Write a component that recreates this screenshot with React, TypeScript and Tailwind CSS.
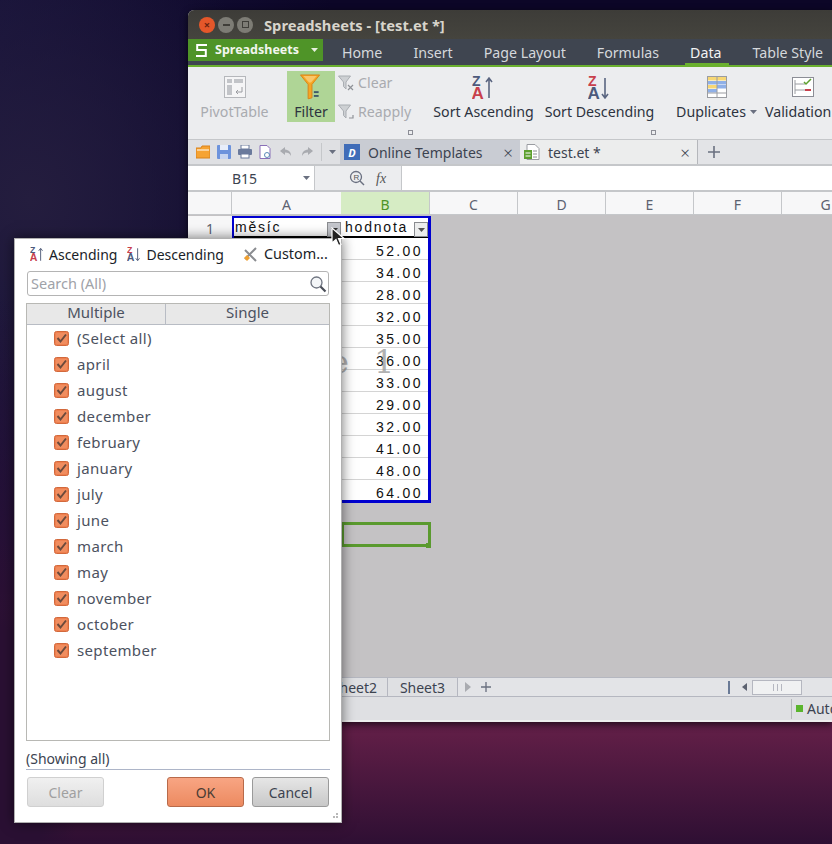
import React from 'react';

const tabs = ['Home', 'Insert', 'Page Layout', 'Formulas', 'Data', 'Table Style'];
const columns = ['C', 'D', 'E', 'F', 'G'];
const values = ['52.00', '34.00', '28.00', '32.00', '35.00', '36.00', '33.00', '29.00', '32.00', '41.00', '48.00', '64.00'];
const months = ['(Select all)', 'april', 'august', 'december', 'february', 'january', 'july', 'june', 'march', 'may', 'november', 'october', 'september'];

function SortIcon({ down, size = 24 }: { down?: boolean; size?: number }) {
  const top = down ? '#c8404c' : '#4d5a7c';
  const bottom = down ? '#4d5a7c' : '#c8404c';
  return (
    <svg width={size} height={size} viewBox="0 0 24 24" className="shrink-0">
      <text x="0" y="10" fontSize="14" fontWeight="700" fontFamily="Liberation Sans" fill={top}>Z</text>
      <text x="-0.5" y="23" fontSize="17" fontWeight="700" fontFamily="Liberation Sans" fill={bottom}>A</text>
      {down ? (
        <path d="M17 2v19M14 18l3 4 3-4" stroke="#5a6580" strokeWidth="1.6" fill="none" />
      ) : (
        <path d="M17 22V3M14 6l3-4 3 4" stroke="#5a6580" strokeWidth="1.6" fill="none" />
      )}
    </svg>
  );
}

function FunnelSmall({ children }: { children?: React.ReactNode }) {
  return (
    <svg width="16" height="16" viewBox="0 0 16 16" className="shrink-0">
      <path d="M0.5 1h12L8 7v7L5.5 11.500V7z" fill="#cdd0d3" stroke="#a9adb2" />
      {children}
    </svg>
  );
}

function Check() {
  return (
    <svg width="15" height="15" viewBox="0 0 15 15" className="shrink-0">
      <rect x="0.5" y="0.500" width="14" height="14" rx="2" fill="#ee7f4e" stroke="#d2693c" />
      <rect x="2" y="2" width="11" height="11" rx="1" fill="#f08d5f" />
      <path d="M3.500 7l3 3.500 5.500-7" stroke="#6b4a3c" strokeWidth="2" fill="none" />
    </svg>
  );
}

function Caret({ color = '#6a7080' }: { color?: string }) {
  return (
    <svg width="7" height="4" viewBox="0 0 7 4" className="shrink-0">
      <path d="M0 0h7L3.500 4z" fill={color} />
    </svg>
  );
}

function Plus({ size }: { size: number }) {
  return (
    <svg width={size} height={size} viewBox="0 0 12 12" className="shrink-0">
      <path d="M6 0v12M0 6h12" stroke="#6a7080" strokeWidth="1.600" />
    </svg>
  );
}

function SpreadsheetWindow() {
  return (
    <div className="absolute left-[188px] top-[10px] flex h-[712px] w-[644px] flex-col overflow-hidden rounded-tl-[6px] bg-[#e3e4e7] text-[14px] text-[#3c4350] shadow-[0_2px_7px_rgba(0,0,0,0.65)]">
      {/* title bar */}
      <div className="flex h-[29px] shrink-0 items-center bg-gradient-to-b from-[#3d3c38] to-[#45443e] pl-[11px]">
        <div className="flex items-center gap-[3px]">
          <div className="flex h-[16px] w-[16px] items-center justify-center rounded-full bg-[#e4572a] text-[11px] font-bold leading-none text-[#6b2410]">×</div>
          <div className="flex h-[16px] w-[16px] items-center justify-center rounded-full bg-[#7d7c75]">
            <div className="h-[2px] w-[7px] bg-[#3f3e39]"></div>
          </div>
          <div className="flex h-[16px] w-[16px] items-center justify-center rounded-full bg-[#7d7c75]">
            <div className="h-[7px] w-[7px] border border-[#3f3e39]"></div>
          </div>
        </div>
        <span className="ml-[11px] pt-[1px] text-[14.7px] font-bold text-[#d8d5cc]">Spreadsheets - [test.et *]</span>
      </div>

      {/* tab bar */}
      <div className="flex h-[26px] shrink-0 items-start bg-[#3f4550]">
        <div className="flex h-[22px] w-[135px] items-center bg-[#4f9428] pl-[8px] text-[12.5px] font-bold text-[#f2f6ee]">
          <svg width="11" height="13" viewBox="0 0 11 13" className="mr-[8px] shrink-0">
            <path d="M11 1H1.200v5H9.800v6H0" stroke="#fff" strokeWidth="2" fill="none" />
          </svg>
          <span>Spreadsheets</span>
          <span className="ml-auto mr-[5px]"><Caret color="#e8f0e0" /></span>
        </div>
        <div className="ml-[19px] flex h-[26px] items-center gap-[31px] whitespace-nowrap pt-[2px] text-[14.2px] text-[#d5d8dc]">
          {tabs.map((t) => (
            <span key={t} className={t === 'Data' ? 'relative text-[#f2f3f4]' : ''}>
              {t}
              {t === 'Data' && <span className="absolute -bottom-[1px] -left-[5px] -right-[8px] h-[2px] bg-[#6ab02e]"></span>}
            </span>
          ))}
        </div>
      </div>
      <div className="h-[2px] shrink-0 bg-[#6ab02e]"></div>

      {/* ribbon */}
      <div className="relative flex h-[73px] shrink-0 items-start whitespace-nowrap border-b border-[#c5c7ca] bg-[#ecedef] pt-[4px] text-[14.2px] text-[#2d3340]">
        <div className="ml-[11px] flex w-[71px] flex-col items-center text-[#a9abb0]">
          <svg width="24" height="24" viewBox="0 0 24 24" className="mt-[4px]">
            <rect x="1.500" y="1.500" width="21" height="21" fill="#f5f5f6" stroke="#b5b7bb" />
            <rect x="4" y="4" width="5" height="4" fill="#c2c4c8" />
            <rect x="11" y="4" width="9" height="4" fill="#c2c4c8" />
            <rect x="4" y="10" width="5" height="10" fill="#c2c4c8" />
            <path d="M19 12v5h-6M15 15l-2 2 2 2" stroke="#9a9ca1" fill="none" />
          </svg>
          <span className="mt-[2px]">PivotTable</span>
        </div>
        <div className="ml-[17px] flex h-[51px] w-[48px] flex-col items-center bg-[#afd596]">
          <svg width="24" height="28" viewBox="0 0 24 28" className="mt-[3px]">
            <path d="M1 1h20l-8 10v14l-4 1V11z" fill="#f5a623" stroke="#d9821a" />
            <path d="M4 2h14l-6 7H10z" fill="#f9c66a" />
            <rect x="15" y="18" width="5" height="2" fill="#3f5a6a" />
            <rect x="15" y="22" width="5" height="2" fill="#3f5a6a" />
          </svg>
          <span className="text-[#2d3340]">Filter</span>
        </div>
        <div className="ml-[3px] flex w-[95px] flex-col pt-[2px] text-[#a9abb0]">
          <div className="flex h-[20px] items-center gap-[4px]">
            <FunnelSmall><path d="M10 10l5 5M15 10l-5 5" stroke="#8f9297" strokeWidth="1.200" /></FunnelSmall>
            <span>Clear</span>
          </div>
          <div className="mt-[9px] flex h-[20px] items-center gap-[4px]">
            <FunnelSmall><path d="M11 14h4v-3" stroke="#8f9297" strokeWidth="1.200" fill="none" /></FunnelSmall>
            <span>Reapply</span>
          </div>
        </div>
        <div className="flex w-[101px] flex-col items-center pt-[5px]">
          <SortIcon />
          <span className="mt-[1px]">Sort Ascending</span>
        </div>
        <div className="ml-[11px] flex w-[109px] flex-col items-center pt-[5px]">
          <SortIcon down />
          <span className="mt-[1px]">Sort Descending</span>
        </div>
        <div className="ml-[22px] flex w-[81px] flex-col items-center pt-[5px]">
          <svg width="20" height="22" viewBox="0 0 20 22">
            <rect x="0.500" y="0.500" width="19" height="21" fill="#fff" stroke="#9a9ca1" />
            <rect x="1" y="1" width="9" height="3.500" fill="#f7d774" />
            <rect x="10" y="1" width="9" height="3.500" fill="#f7d774" />
            <rect x="1" y="5" width="9" height="3.500" fill="#8fb0e8" />
            <rect x="10" y="5" width="9" height="3.500" fill="#8fb0e8" />
            <rect x="1" y="9" width="9" height="3.500" fill="#f7d774" />
            <rect x="10" y="9" width="9" height="3.500" fill="#8fb0e8" />
            <rect x="1" y="13" width="9" height="3.500" fill="#8fb0e8" />
            <path d="M10 0v22M0 17h20" stroke="#9a9ca1" />
          </svg>
          <span className="mt-[3px] flex items-center gap-[4px]">Duplicates<Caret /></span>
        </div>
        <div className="ml-[8px] flex flex-col items-start pt-[6px]">
          <svg width="22" height="20" viewBox="0 0 22 20" className="ml-[27px]">
            <rect x="0.500" y="0.500" width="21" height="19" fill="#fff" stroke="#8c8e96" />
            <path d="M3 7h10M3 13h10M3 3v14" stroke="#9a9ca1" />
            <path d="M12 5l2 2 5-5" stroke="#5da02e" strokeWidth="1.500" fill="none" />
            <rect x="13" y="12" width="6" height="2" fill="#c8404c" />
          </svg>
          <span className="mt-[4px]">Validation</span>
        </div>
        <div className="absolute left-[220px] top-[63px] h-[5px] w-[5px] border border-[#8c8e96]"></div>
        <div className="absolute left-[463px] top-[63px] h-[5px] w-[5px] border border-[#8c8e96]"></div>
      </div>

      {/* quick access + document tabs */}
      <div className="flex h-[26px] shrink-0 items-center whitespace-nowrap border-b-2 border-[#c5c7ca] bg-[#e3e4e7]">
        <div className="flex h-full w-[152px] items-center gap-[7px] bg-[#dfe0e3] pl-[8px]">
          <svg width="14" height="14" viewBox="0 0 14 14"><path d="M0 3h5l1-2h8v12H0z" fill="#f6a332" stroke="#d9821a" /><path d="M1 5h12" stroke="#fff" /></svg>
          <svg width="14" height="14" viewBox="0 0 14 14"><rect width="14" height="14" rx="1" fill="#6d93dc" /><rect x="3" y="0" width="8" height="5" fill="#e8eefa" /><rect x="3" y="9" width="8" height="5" fill="#c7d5f0" /></svg>
          <svg width="14" height="14" viewBox="0 0 14 14"><rect x="3" y="0" width="8" height="4" fill="#fff" stroke="#6a7a9c" /><rect y="4" width="14" height="6" rx="1" fill="#6a7a9c" /><rect x="3" y="9" width="8" height="4" fill="#fff" stroke="#6a7a9c" /></svg>
          <svg width="13" height="14" viewBox="0 0 13 14"><path d="M1 .5h7l3 3v10H1z" fill="#fff" stroke="#8a70b8" /><circle cx="8" cy="10" r="2.500" fill="none" stroke="#5a8ab8" /></svg>
          <svg width="14" height="12" viewBox="0 0 14 12"><path d="M6 1L1 5l5 4V6.500c3 0 5 1 6 3.500 0-4-2-6-6-6.500z" fill="#a9abb0" /></svg>
          <svg width="14" height="12" viewBox="0 0 14 12"><path d="M8 1l5 4-5 4V6.500c-3 0-5 1-6 3.500 0-4 2-6 6-6.500z" fill="#a9abb0" /></svg>
          <div className="h-[18px] w-px bg-[#c5c7ca]"></div>
          <Caret />
        </div>
        <div className="flex h-full w-[180px] items-center bg-[#c9ccd3] pl-[4px] text-[#3c4350]">
          <div className="flex h-[16px] w-[16px] items-center justify-center bg-[#3f6cb8] text-[11px] font-bold italic leading-none text-white">D</div>
          <span className="ml-[8px]">Online Templates</span>
          <span className="ml-auto mr-[7px] text-[17px] font-light leading-none">×</span>
        </div>
        <div className="flex h-full w-[178px] items-center border-r border-[#b5b7bb] bg-[#eceded] pl-[4px]">
          <svg width="16" height="16" viewBox="0 0 16 16">
            <path d="M3 .5h8l4 4v11H3z" fill="#fff" stroke="#9a9ca1" />
            <rect x="0" y="6" width="8" height="9" fill="#5da02e" />
            <path d="M1.500 9h5M1.500 12h5" stroke="#fff" />
            <path d="M9 7h4M9 10h4M9 13h4" stroke="#8a8c90" />
          </svg>
          <span className="ml-[8px]">test.et *</span>
          <span className="ml-auto mr-[7px] text-[17px] font-light leading-none">×</span>
        </div>
        <span className="ml-[10px]"><Plus size={12} /></span>
      </div>

      {/* formula bar */}
      <div className="flex h-[26px] shrink-0 items-center border-b-2 border-[#c5c7ca] bg-[#ecedef]">
        <div className="flex h-full w-[127px] items-center border-r border-[#c5c7ca] bg-white pr-[4px]">
          <span className="ml-[44px]">B15</span>
          <span className="ml-auto"><Caret /></span>
        </div>
        <svg width="16" height="16" viewBox="0 0 16 16" className="ml-[34px]">
          <circle cx="7" cy="7" r="5.500" fill="none" stroke="#6a7080" strokeWidth="1.300" />
          <text x="4.500" y="10" fontSize="8" fontFamily="Liberation Sans" fill="#555">R</text>
          <path d="M11 11l4 4" stroke="#6a7080" strokeWidth="1.500" />
        </svg>
        <span className="ml-[11px] font-['Liberation_Serif',serif] text-[14px] italic text-[#555]">fx</span>
        <div className="ml-[15px] h-full flex-1 border-l border-[#c5c7ca] bg-white"></div>
      </div>

      {/* column headers */}
      <div className="flex h-[23px] shrink-0 border-b border-[#c5c7ca] bg-[#f7f7f8] text-[#5c6270]">
        <div className="w-[44px] shrink-0 border-r border-[#c5c7ca]"></div>
        <div className="flex w-[109px] shrink-0 items-center justify-center pt-[3px]">A</div>
        <div className="flex w-[88px] shrink-0 items-center justify-center bg-[#d6ecc4] pt-[3px] text-[#4f9428]">B</div>
        {columns.map((c) => (
          <div key={c} className="flex w-[88px] shrink-0 items-center justify-center border-l border-[#c5c7ca] pt-[3px]">{c}</div>
        ))}
      </div>

      {/* sheet */}
      <div className="relative flex-1 bg-[#c4c2c4] pt-[1px] font-['Liberation_Sans',sans-serif] text-[#111]">
        <div className="flex">
          <div className="flex h-[22px] w-[44px] shrink-0 items-center justify-center bg-[#f7f7f8] pt-[3px] font-['Noto_Sans',sans-serif] text-[#5c6270]">1</div>
          <div className="w-[199px] border-2 border-r-[3px] border-b-[3px] border-[#0000d0] bg-white">
            <div className="flex h-[20px] border-b-2 border-black tracking-[1.8px]">
              <div className="flex w-[107px] items-end justify-between pl-[1px]">
                <span className="leading-[18px]">měsíc</span>
                <div className="-mb-[1px] flex h-[15px] w-[14px] items-center justify-center border border-[#8a8c90] bg-[#c4c6cc]"><Caret color="#333" /></div>
              </div>
              <div className="flex flex-1 items-end justify-between pl-[4px]">
                <span className="leading-[18px]">hodnota</span>
                <div className="-mb-[1px] flex h-[15px] w-[14px] items-center justify-center border border-[#8a8c90] bg-[#eceded]"><Caret color="#555" /></div>
              </div>
            </div>
            {values.map((v, i) => (
              <div key={i} className="flex h-[22px] items-start justify-end border-b border-[#d4d4d4] pr-[5px] pt-[3px] leading-[20px] tracking-[2.4px] last:h-[20px] last:border-b-0">{v}</div>
            ))}
          </div>
        </div>
        {/* selected cell B15 */}
        <div className="relative ml-[153px] mt-[19px] h-[25px] w-[90px] border-[3px] border-[#5a9a2e]">
          <div className="absolute -bottom-[4px] -right-[3px] h-[5px] w-[5px] bg-[#5a9a2e]"></div>
        </div>
        <div className="absolute left-[142px] top-[123px] whitespace-pre font-['DejaVu_Serif',serif] text-[32px] tracking-[7.5px] text-[#9c9c9c]/80">e 1</div>
      </div>

      {/* sheet tabs */}
      <div className="flex h-[20px] shrink-0 items-center border-y border-[#b5b7c0] bg-[#e3e4e7] text-[#3c4350]">
        <div className="ml-[134px] flex h-full w-[66px] shrink-0 items-center justify-center border-r border-[#b5b7c0] bg-[#dfe0e3]">Sheet2</div>
        <div className="flex h-full w-[70px] shrink-0 items-center justify-center border-r border-[#b5b7c0] bg-[#dfe0e3]">Sheet3</div>
        <svg width="6" height="10" viewBox="0 0 6 10" className="ml-[7px]"><path d="M0 0l6 5-6 5z" fill="#a9abb0" /></svg>
        <span className="ml-[10px]"><Plus size={10} /></span>
        <div className="ml-[237px] h-[13px] w-[2px] bg-[#6a7a96]"></div>
        <svg width="5" height="8" viewBox="0 0 5 8" className="ml-[12px]"><path d="M5 0L0 4l5 4z" fill="#5c6270" /></svg>
        <div className="ml-[5px] flex h-[15px] w-[50px] items-center justify-center gap-[3px] border border-[#b5b7c0] bg-[#f0f1f2]">
          <div className="h-[7px] w-px bg-[#b5b7c0]"></div>
          <div className="h-[7px] w-px bg-[#b5b7c0]"></div>
          <div className="h-[7px] w-px bg-[#b5b7c0]"></div>
        </div>
      </div>

      {/* status bar */}
      <div className="flex h-[25px] shrink-0 items-center overflow-hidden whitespace-nowrap border-b-2 border-[#eeeeee] bg-[#dfe0e3]">
        <div className="ml-[603px] h-[20px] w-px shrink-0 bg-[#b5b7bb]"></div>
        <div className="ml-[4px] h-[7px] w-[7px] shrink-0 bg-[#5bb52e]"></div>
        <span className="ml-[4px] text-[#3c4350]">Auto</span>
      </div>
    </div>
  );
}

function FilterDialog() {
  return (
    <div className="absolute left-[14px] top-[238px] flex h-[585px] w-[328px] flex-col border border-[#b0b0b0] bg-white px-[11px] text-[14px] text-[#3c4350] shadow-[0_0_12px_rgba(0,0,0,0.55)]">
      <div className="flex h-[32px] shrink-0 items-center whitespace-nowrap pb-[2px] pl-[4px] text-[#1a1e28]">
        <SortIcon size={15} />
        <span className="ml-[4px]">Ascending</span>
        <span className="ml-[10px]"><SortIcon down size={15} /></span>
        <span className="ml-[4px]">Descending</span>
        <svg width="16" height="15" viewBox="0 0 16 15" className="ml-[19px] shrink-0">
          <path d="M2 3l11 11M13 1l-11 11" stroke="#8a8c90" strokeWidth="2" />
          <path d="M1 11l3 3 3-3-3-3z" fill="#f0a030" />
        </svg>
        <span className="ml-[5px] text-[14.4px]">Custom...</span>
      </div>
      <div className="ml-[1px] flex h-[25px] w-[302px] shrink-0 items-center justify-between rounded-[3px] border border-[#b4b4b4] pl-[3px] pr-[1px] text-[14.5px] text-[#a0a2a8]">
        <span>Search (All)</span>
        <svg width="18" height="18" viewBox="0 0 18 18">
          <circle cx="7.500" cy="7.500" r="5.500" fill="#f4f6f8" stroke="#6f7480" strokeWidth="1.300" />
          <path d="M11.500 11.500L16.500 16.500" stroke="#4a4e58" strokeWidth="2.200" />
        </svg>
      </div>
      <div className="mt-[7px] flex h-[438px] w-[304px] shrink-0 flex-col border border-[#b8b8b4] text-[15px] tracking-[0.35px] text-[#4c5260]">
        <div className="flex h-[21px] shrink-0 border-b border-[#b8bcc4] bg-[#e8e8e8] tracking-normal">
          <div className="flex w-[139px] items-center justify-center border-r border-[#b8bcc4] pb-[3px]">Multiple</div>
          <div className="flex flex-1 items-center justify-center pb-[3px]">Single</div>
        </div>
        <div className="flex flex-col">
          {months.map((m) => (
            <div key={m} className="flex h-[26px] items-center pl-[27px]">
              <Check />
              <span className="ml-[8px]">{m}</span>
            </div>
          ))}
        </div>
      </div>
      <div className="mt-[7px] h-[22px] shrink-0 border-b border-[#adb5c8] text-[#3c4350]">(Showing all)</div>
      <div className="mt-[7px] flex shrink-0 gap-[8px] pl-[1px]">
        <button className="mr-[55px] h-[30px] w-[77px] rounded-[3px] border border-[#d0d0d0] bg-gradient-to-b from-[#f0f0f0] to-[#dedede] text-[#a0a0a0]">Clear</button>
        <button className="h-[30px] w-[77px] rounded-[3px] border border-[#b86a4a] bg-gradient-to-b from-[#f8a583] to-[#ec8a60] text-[#4a3c34]">OK</button>
        <button className="h-[30px] w-[77px] rounded-[3px] border border-[#9a9a9a] bg-gradient-to-b from-[#e6e6e6] to-[#c8c8c8] text-[#3c4350]">Cancel</button>
      </div>
      <div className="absolute bottom-[4px] right-[3px] grid grid-cols-2 gap-[1px]">
        <span></span>
        <span className="h-[2px] w-[2px] bg-[#b8b8b8]"></span>
        <span className="h-[2px] w-[2px] bg-[#b8b8b8]"></span>
        <span className="h-[2px] w-[2px] bg-[#b8b8b8]"></span>
      </div>
    </div>
  );
}

export default function App() {
  return (
    <div className="relative h-[844px] w-[832px] overflow-hidden bg-[radial-gradient(ellipse_80px_220px_at_0px_760px,#2a1033_60%,transparent_100%),linear-gradient(180deg,transparent_35%,#2a1036_70%,#5f1e46_87%,#2e0f33_100%),radial-gradient(ellipse_260px_300px_at_30px_200px,#241d3e_0%,transparent_100%),linear-gradient(90deg,#17123a_0%,#0c0627_40%)] font-['Noto_Sans',sans-serif]">
      <SpreadsheetWindow />
      <FilterDialog />
      {/* mouse cursor */}
      <svg width="14" height="20" viewBox="0 0 14 20" className="absolute left-[331px] top-[227px]">
        <path d="M1 1v15l4-3.500 2.500 6 2.500-1-2.500-6H13z" fill="#222" stroke="#fff" strokeWidth="1.200" />
      </svg>
    </div>
  );
}
